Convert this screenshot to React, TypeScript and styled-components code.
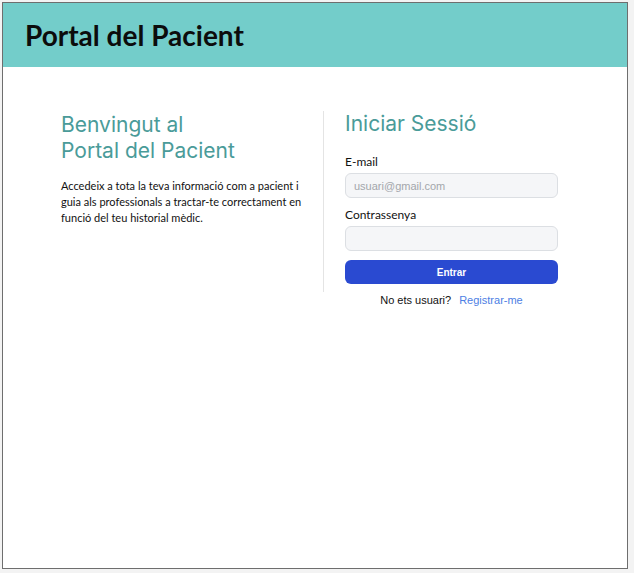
import React from 'react';
import styled, { createGlobalStyle } from 'styled-components';

const GlobalStyle = createGlobalStyle`
  html, body {
    margin: 0;
    padding: 0;
    background-color: #f3f3f3;
  }
  body {
    font-family: Lato, "Noto Sans", sans-serif;
    color: #111111;
  }
`;

const Frame = styled.div`
  margin: 2px 0 0 2px;
  width: 624px;
  height: 565px;
  border: 1px solid #6e6e6e;
  background-color: #FFFFFF;
  box-sizing: content-box;
  display: flex;
  flex-direction: column;
`;

const Header = styled.header`
  background-color: #73cdca;
  height: 64px;
  display: flex;
  align-items: center;
  padding-left: 22px;
`;

const Title = styled.h1`
  margin: 0;
  font-family: Lato, sans-serif;
  font-weight: 700;
  font-size: 28px;
  color: #0c0c0c;
`;

const Content = styled.main`
  display: flex;
  padding: 44px 0 0 58px;
`;

const LeftCol = styled.section`
  width: 262px;
  padding-top: 1px;
`;

const Heading = styled.h2`
  margin: 0;
  font-family: Inter, sans-serif;
  font-weight: 400;
  font-size: 21px;
  line-height: 26px;
  color: #4a9b99;
`;

const Intro = styled.p`
  margin: 14px 0 0;
  font-size: 11px;
  line-height: 16px;
  color: #111111;
  width: 245px;
`;

const RightCol = styled.section`
  width: 236px;
`;

const Panel = styled.form`
  border-left: 1px solid #e4e4e4;
  padding: 0 0 8px 21px;
  display: flex;
  flex-direction: column;
`;

const Label = styled.label`
  font-size: 12px;
  line-height: 16px;
  margin-top: ${props => props.$first ? '17px' : '9px'};
  margin-bottom: 3px;
`;

const Input = styled.input`
  box-sizing: border-box;
  height: 25px;
  width: 213px;
  padding: 0 8px;
  border: 1px solid #dcdfe3;
  border-radius: 6px;
  background-color: #f5f6f8;
  font-family: "Liberation Sans", Arial, sans-serif;
  font-size: 11px;
  outline: none;

  &::placeholder {
    color: #a3a6ab;
  }
`;

const Button = styled.button`
  margin-top: 9px;
  height: 24px;
  width: 213px;
  border: none;
  border-radius: 6px;
  background-color: #2a4ad1;
  color: #FFFFFF;
  font-family: "Liberation Sans", Arial, sans-serif;
  font-weight: 700;
  font-size: 10px;
  cursor: pointer;
`;

const Footer = styled.p`
  margin: 0;
  padding-left: 22px;
  width: 213px;
  text-align: center;
  font-family: "Liberation Sans", Arial, sans-serif;
  font-size: 11px;
  line-height: 16px;
  color: #111111;
`;

const Link = styled.a`
  color: #4d80e4;
  text-decoration: none;
  margin-left: 8px;
`;

const App = () => {
  return (
    <>
      <GlobalStyle />
      <Frame>
        <Header>
          <Title>Portal del Pacient</Title>
        </Header>
        <Content>
          <LeftCol>
            <Heading>
              Benvingut al
              <br />
              Portal del Pacient
            </Heading>
            <Intro>
              Accedeix a tota la teva informació com a pacient i guia als professionals a
              tractar-te correctament en funció del teu historial mèdic.
            </Intro>
          </LeftCol>
          <RightCol>
            <Panel onSubmit={e => e.preventDefault()}>
              <Heading>Iniciar Sessió</Heading>
              <Label $first htmlFor="email">E-mail</Label>
              <Input id="email" type="email" placeholder="usuari@gmail.com" />
              <Label htmlFor="password">Contrassenya</Label>
              <Input id="password" type="password" />
              <Button type="submit">Entrar</Button>
            </Panel>
            <Footer>
              No ets usuari?
              <Link href="#">Registrar-me</Link>
            </Footer>
          </RightCol>
        </Content>
      </Frame>
    </>
  );
};

export default App;
